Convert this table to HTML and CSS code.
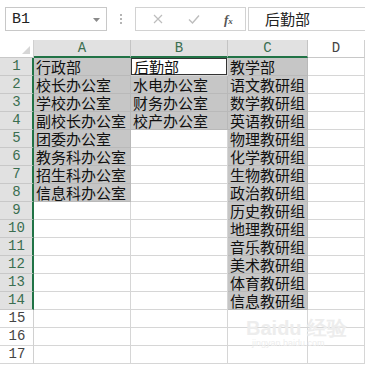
FILE: index.html
```html
<!DOCTYPE html>
<html lang="zh">
<head>
<meta charset="utf-8">
<link rel="stylesheet" href="styles.css">
</head>
<body>
<div class="app">
  <div class="toolbar">
    <div class="namebox"><span class="nb-text">B1</span>
      <svg class="nb-arrow" width="7" height="4" viewBox="0 0 7 4"><polygon points="0,0 7,0 3.5,4" fill="#8a8a8a"/></svg>
    </div>
    <div class="dots"><i></i><i></i><i></i></div>
    <div class="fbtns">
      <svg class="fb-x" width="10" height="10" viewBox="0 0 10 10"><path d="M1 1L9 9M9 1L1 9" stroke="#bdbdbd" stroke-width="1.2" fill="none"/></svg>
      <svg class="fb-ok" width="12" height="10" viewBox="0 0 12 10"><path d="M1 5.5L4.5 9L11 1.5" stroke="#bdbdbd" stroke-width="1.4" fill="none"/></svg>
      <span class="fb-fx">f<sub>x</sub></span>
    </div>
    <div class="formula">后勤部</div>
  </div>
  <div class="sheet">
    <div class="corner"><svg width="8" height="8" viewBox="0 0 8 8"><polygon points="8,0 8,8 0,8" fill="#d6d6d6"/></svg></div>
    <div class="ch sel">A</div><div class="ch sel">B</div><div class="ch sel">C</div><div class="ch">D</div>

    <div class="rh sel">1</div><div class="c g">行政部</div><div class="c act">后勤部</div><div class="c g">教学部</div><div class="c"></div>
    <div class="rh sel">2</div><div class="c g">校长办公室</div><div class="c g">水电办公室</div><div class="c g">语文教研组</div><div class="c"></div>
    <div class="rh sel">3</div><div class="c g">学校办公室</div><div class="c g">财务办公室</div><div class="c g">数学教研组</div><div class="c"></div>
    <div class="rh sel">4</div><div class="c g">副校长办公室</div><div class="c g">校产办公室</div><div class="c g">英语教研组</div><div class="c"></div>
    <div class="rh sel">5</div><div class="c g">团委办公室</div><div class="c"></div><div class="c g">物理教研组</div><div class="c"></div>
    <div class="rh sel">6</div><div class="c g">教务科办公室</div><div class="c"></div><div class="c g">化学教研组</div><div class="c"></div>
    <div class="rh sel">7</div><div class="c g">招生科办公室</div><div class="c"></div><div class="c g">生物教研组</div><div class="c"></div>
    <div class="rh sel">8</div><div class="c g">信息科办公室</div><div class="c"></div><div class="c g">政治教研组</div><div class="c"></div>
    <div class="rh sel">9</div><div class="c"></div><div class="c"></div><div class="c g">历史教研组</div><div class="c"></div>
    <div class="rh sel">10</div><div class="c"></div><div class="c"></div><div class="c g">地理教研组</div><div class="c"></div>
    <div class="rh sel">11</div><div class="c"></div><div class="c"></div><div class="c g">音乐教研组</div><div class="c"></div>
    <div class="rh sel">12</div><div class="c"></div><div class="c"></div><div class="c g">美术教研组</div><div class="c"></div>
    <div class="rh sel">13</div><div class="c"></div><div class="c"></div><div class="c g">体育教研组</div><div class="c"></div>
    <div class="rh sel">14</div><div class="c"></div><div class="c"></div><div class="c g">信息教研组</div><div class="c"></div>
    <div class="rh">15</div><div class="c"></div><div class="c"></div><div class="c"></div><div class="c"></div>
    <div class="rh">16</div><div class="c"></div><div class="c"></div><div class="c"></div><div class="c"></div>
    <div class="rh">17</div><div class="c"></div><div class="c"></div><div class="c"></div><div class="c"></div>
  </div>
  <div class="watermark"><span class="wm-big">Bai<b>du</b> 经验</span><span class="wm-small">jingyan.baidu.com</span></div>
</div>
</body>
</html>
```

FILE: styles.css
```css
* { box-sizing: border-box; }
html, body { margin: 0; padding: 0; background: #fff; }
body { width: 365px; height: 367px; overflow: hidden; font-family: "Noto Sans CJK SC", sans-serif; }
.app { position: relative; width: 365px; height: 367px; overflow: hidden; }

.toolbar { height: 40px; display: flex; align-items: flex-start; padding-top: 7px; padding-left: 5px; }
.namebox { width: 102px; height: 24px; border: 1px solid #c8c8c8; display: flex; align-items: center; justify-content: space-between; padding: 0 6px 0 6px; }
.nb-text { font-family: "Liberation Mono", monospace; font-size: 15px; color: #222; }
.nb-arrow { margin-top: 1px; }
.dots { width: 28px; height: 24px; display: flex; flex-direction: column; align-items: center; justify-content: center; gap: 2px; }
.dots i { display: block; width: 2px; height: 2px; background: #b5b5b5; }
.fbtns { width: 111px; height: 24px; border: 1px solid #d2d2d2; display: flex; align-items: center; padding-left: 17px; }
.fb-x { margin-right: 25px; }
.fb-ok { margin-right: 24px; }
.fb-fx { font-family: "Liberation Serif", serif; font-style: italic; font-weight: bold; font-size: 13px; color: #555; line-height: 1; }
.fb-fx sub { font-size: 9px; vertical-align: 0; }
.formula { margin-left: 2px; flex: 1; height: 24px; border: 1px solid #d2d2d2; border-right: none; padding-left: 16px; font-size: 15px; line-height: 22px; color: #222; }

.sheet { display: grid; grid-template-columns: 34px 97px 97px 80px 1fr; grid-template-rows: repeat(18, 18px); }
.corner { background: #fff; border-right: 1px solid #d0d0d0; border-bottom: 1px solid #c8c8c8; display: flex; align-items: flex-end; justify-content: flex-end; padding: 0 3px 3px 0; }
.ch { font-family: "Liberation Mono", monospace; font-size: 14px; line-height: 17px; text-align: center; color: #444; background: #fff; border-right: 1px solid #d0d0d0; border-bottom: 1px solid #c8c8c8; }
.ch.sel { background: #e1e1e1; color: #3a6e50; border-bottom: 2px solid #217346; border-right-color: #c4c4c4; }
.rh { font-family: "Liberation Mono", monospace; font-size: 14px; line-height: 17px; text-align: center; padding-left: 1px; color: #444; background: #fff; border-right: 1px solid #d0d0d0; border-bottom: 1px solid #d6d6d6; }
.rh.sel { background: #e1e1e1; color: #3a6e50; border-right: 2px solid #217346; border-bottom-color: #c8c8c8; }
.c { font-size: 15px; line-height: 17px; padding-left: 2px; color: #111; white-space: nowrap; border-right: 1px solid #d6d6d6; border-bottom: 1px solid #d6d6d6; }
.c.g { background: #c6c6c6; border-color: #b9b9b9; }
.c.act { background: #fff; box-shadow: inset 0 0 0 1px #333; padding-left: 3px; }

.watermark { position: absolute; left: 246px; top: 318px; display: flex; flex-direction: column; align-items: flex-start; color: #ededed; pointer-events: none; }
.wm-big { font-family: "Liberation Sans", sans-serif; font-size: 20px; font-weight: bold; line-height: 20px; }
.wm-big b { font-weight: bold; }
.wm-small { font-family: "Liberation Sans", sans-serif; font-size: 9px; line-height: 10px; padding-left: 6px; }
```
